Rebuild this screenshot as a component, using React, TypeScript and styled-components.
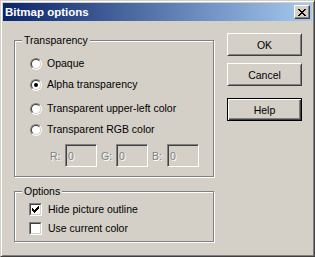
import React from 'react';
import styled, { createGlobalStyle } from 'styled-components';

const GlobalStyle = createGlobalStyle`
    body {
        margin: 0;
        background: #d4d0c8;
        font-family: 'Liberation Sans', Arial, sans-serif;
        font-size: 10.5px;
        color: #000;
    }
`;

const Window = styled.div`
    box-sizing: border-box;
    width: 315px;
    height: 257px;
    display: flex;
    flex-direction: column;
    padding: 2px;
    background: #d4d0c8;
    border: 1px solid;
    border-color: #d4d0c8 #404040 #404040 #d4d0c8;
    box-shadow: inset 1px 1px 0 #fff, inset -1px -1px 0 #808080;
`;

const TitleBar = styled.div`
    height: 18px;
    display: flex;
    align-items: center;
    justify-content: space-between;
    padding: 0 2px;
    background: linear-gradient(to right, #0a246a, #a6caf0);
`;

const Title = styled.span`
    color: #fff;
    font-weight: bold;
    font-size: 11.5px;
    line-height: 18px;
`;

const CloseBtn = styled.div`
    box-sizing: border-box;
    width: 16px;
    height: 14px;
    display: flex;
    align-items: center;
    justify-content: center;
    background: #d4d0c8;
    border: 1px solid;
    border-color: #fff #404040 #404040 #fff;
    box-shadow: inset -1px -1px 0 #808080;
`;

const Body = styled.div`
    display: flex;
    padding: 12px 0 0 11px;
`;

const LeftCol = styled.div`
    display: flex;
    flex-direction: column;
    gap: 14px;
    margin-top: 7px;
    width: 200px;
`;

const RightCol = styled.div`
    display: flex;
    flex-direction: column;
    margin-left: 13px;
`;

const Group = styled.div<{ $height: number; $pad: number }>`
    position: relative;
    box-sizing: border-box;
    height: ${p => p.$height}px;
    padding-left: ${p => p.$pad}px;
    border: 1px solid #808080;
    box-shadow: 1px 1px 0 #fff, inset 1px 1px 0 #fff;
`;

const GroupLabel = styled.span`
    position: absolute;
    top: -7px;
    left: 7px;
    padding: 0 2px;
    line-height: 13px;
    background: #d4d0c8;
`;

const Row = styled.div<{ $mt: number }>`
    display: flex;
    align-items: center;
    height: 13px;
    margin-top: ${p => p.$mt}px;
    line-height: 13px;
`;

const RadioOuter = styled.span`
    box-sizing: border-box;
    width: 12px;
    height: 12px;
    margin-right: 5px;
    border-radius: 50%;
    border: 1px solid;
    border-color: #808080 #fff #fff #808080;
    display: flex;
`;

const RadioInner = styled.span`
    box-sizing: border-box;
    flex: 1;
    border-radius: 50%;
    border: 1px solid;
    border-color: #404040 #d4d0c8 #d4d0c8 #404040;
    background: #fff;
    display: flex;
    align-items: center;
    justify-content: center;
`;

const Dot = styled.span`
    width: 4px;
    height: 4px;
    border-radius: 50%;
    background: #000;
`;

const CheckOuter = styled.span`
    box-sizing: border-box;
    width: 13px;
    height: 13px;
    margin-right: 6px;
    border: 1px solid;
    border-color: #808080 #fff #fff #808080;
    display: flex;
`;

const CheckInner = styled.span`
    box-sizing: border-box;
    flex: 1;
    border: 1px solid;
    border-color: #404040 #d4d0c8 #d4d0c8 #404040;
    background: #fff;
    display: flex;
    padding: 1px;
`;

const EditRow = styled.div`
    display: flex;
    align-items: center;
    gap: 4px;
    margin: 8px 0 0 20px;
`;

const EditPair = styled.div`
    display: flex;
    align-items: center;
`;

const DisabledText = styled.span<{ $w?: number }>`
    width: ${p => (p.$w ? `${p.$w}px` : 'auto')};
    color: #808080;
    text-shadow: 1px 1px 0 #fff;
`;

const Edit = styled.div`
    box-sizing: border-box;
    width: 32px;
    height: 23px;
    padding-left: 2px;
    display: flex;
    align-items: center;
    background: #d4d0c8;
    border: 1px solid;
    border-color: #808080 #fff #fff #808080;
    box-shadow: inset 1px 1px 0 #404040, inset -1px -1px 0 #d4d0c8;
`;

const Button = styled.div<{ $default?: boolean; $mt: number }>`
    box-sizing: border-box;
    width: 75px;
    height: 23px;
    margin-top: ${p => p.$mt}px;
    display: flex;
    align-items: center;
    justify-content: center;
    background: #d4d0c8;
    border: 1px solid;
    border-color: ${p => (p.$default ? '#000' : '#fff #404040 #404040 #fff')};
    box-shadow: ${p =>
        p.$default
            ? 'inset 1px 1px 0 #fff, inset -1px -1px 0 #404040, inset -2px -2px 0 #808080'
            : 'inset 1px 1px 0 #d4d0c8, inset -1px -1px 0 #808080'};
`;

const CloseGlyph = () => (
    <svg width="8" height="7" viewBox="0 0 8 7" shapeRendering="crispEdges">
        <path
            d="M0 0h2v1h-2zM6 0h2v1h-2zM1 1h2v1h-2zM5 1h2v1h-2zM2 2h4v1h-4zM3 3h2v1h-2zM2 4h4v1h-4zM1 5h2v1h-2zM5 5h2v1h-2zM0 6h2v1h-2zM6 6h2v1h-2z"
            fill="#000"
        />
    </svg>
);

const CheckGlyph = () => (
    <svg width="7" height="7" viewBox="0 0 7 7" shapeRendering="crispEdges">
        <path
            d="M6 0h1v1h-1zM5 1h2v1h-2zM0 2h1v1h-1zM4 2h3v1h-3zM0 3h2v1h-2zM3 3h3v1h-3zM0 4h5v1h-5zM1 5h3v1h-3zM2 6h1v1h-1z"
            fill="#000"
        />
    </svg>
);

const Radio = ({ checked }: { checked?: boolean }) => (
    <RadioOuter>
        <RadioInner>{checked && <Dot />}</RadioInner>
    </RadioOuter>
);

const Checkbox = ({ checked }: { checked?: boolean }) => (
    <CheckOuter>
        <CheckInner>{checked && <CheckGlyph />}</CheckInner>
    </CheckOuter>
);

const radios = [
    { label: 'Opaque', mt: 16 },
    { label: 'Alpha transparency', mt: 8, checked: true },
    { label: 'Transparent upper-left color', mt: 11 },
    { label: 'Transparent RGB color', mt: 8 },
];

const App = () => (
    <>
        <GlobalStyle />
        <Window>
            <TitleBar>
                <Title>Bitmap options</Title>
                <CloseBtn>
                    <CloseGlyph />
                </CloseBtn>
            </TitleBar>
            <Body>
                <LeftCol>
                    <Group $height={137} $pad={15}>
                        <GroupLabel>Transparency</GroupLabel>
                        {radios.map(r => (
                            <Row key={r.label} $mt={r.mt}>
                                <Radio checked={r.checked} />
                                {r.label}
                            </Row>
                        ))}
                        <EditRow>
                            {['R', 'G', 'B'].map(c => (
                                <EditPair key={c}>
                                    <DisabledText $w={15}>{c}:</DisabledText>
                                    <Edit>
                                        <DisabledText>0</DisabledText>
                                    </Edit>
                                </EditPair>
                            ))}
                        </EditRow>
                    </Group>
                    <Group $height={51} $pad={14}>
                        <GroupLabel>Options</GroupLabel>
                        <Row $mt={11}>
                            <Checkbox checked />
                            Hide picture outline
                        </Row>
                        <Row $mt={6}>
                            <Checkbox />
                            Use current color
                        </Row>
                    </Group>
                </LeftCol>
                <RightCol>
                    <Button $mt={0}>OK</Button>
                    <Button $mt={7}>Cancel</Button>
                    <Button $mt={12} $default>
                        Help
                    </Button>
                </RightCol>
            </Body>
        </Window>
    </>
);

export default App;
